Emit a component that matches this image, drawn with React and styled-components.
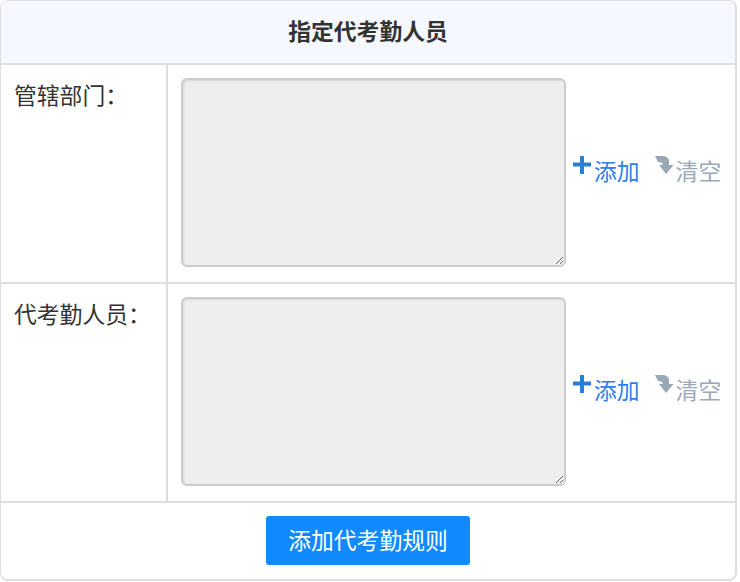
import React from 'react';
import styled, { createGlobalStyle } from 'styled-components';

const GlobalStyle = createGlobalStyle`
  html, body { margin: 0; padding: 0; background: #fff; }
  body { font-family: "Liberation Sans", "Noto Sans CJK SC", sans-serif; color: #333; }
  * { box-sizing: border-box; }
`;
const Panel = styled.div`
  width: 737px;
  height: 581px;
  border: 2px solid #dedede;
  border-top-width: 1px;
  border-left-width: 1px;
  border-radius: 8px;
  overflow: hidden;
  display: flex;
  flex-direction: column;
`;
const Header = styled.div`
  height: 64px;
  flex: none;
  background: #f5f9ff;
  border-bottom: 2px solid #dedede;
  padding-bottom: 3px;
  display: flex;
  align-items: center;
  justify-content: center;
  font-size: 22.8px;
  font-weight: 700;
  color: #333;
`;
const Row = styled.div`
  height: 219px;
  flex: none;
  display: flex;
  border-bottom: 2px solid #dedede;
`;
const LabelCell = styled.div`
  width: 167px;
  flex: none;
  border-right: 2px solid #dedede;
  padding: 13px 0 0 13px;
  font-size: 22.8px;
  line-height: 36px;
  color: #333;
`;
const FieldCell = styled.div`
  flex: 1;
  padding: 13px 0 0 13px;
  display: flex;
  align-items: flex-start;
`;
const Area = styled.textarea`
  width: 385px;
  height: 189px;
  margin: 0;
  flex: none;
  background: #eee;
  border: 2px solid #ccc;
  border-radius: 6px;
  outline: none;
  box-shadow: inset 1px 1px 2px rgba(0, 0, 0, 0.1);
`;
const Action = styled.a`
  display: flex;
  align-items: flex-start;
  margin: 78px 0 0 ${(p) => p.$gap}px;
  font-size: 22.8px;
  line-height: 32px;
  color: ${(p) => p.$color};
  white-space: nowrap;
  cursor: pointer;
  svg { flex: none; margin-top: -1px; margin-right: 2px; }
`;
const Footer = styled.div`
  flex: 1;
  display: flex;
  justify-content: center;
  padding-top: 13px;
`;
const SubmitButton = styled.button`
  width: 204px;
  height: 49px;
  background: #118aff;
  color: #fff;
  border: none;
  border-radius: 3px;
  font-family: inherit;
  font-size: 22.8px;
  padding: 0 0 3px;
  cursor: pointer;
`;

const PlusIcon = () => (
  <svg width="20" height="20" viewBox="0 0 20 20">
    <path d="M8 1h4v6.500h7v4h-7V19H8v-7.500H1v-4h7z" fill="#2a7fd4" />
  </svg>
);
const ClearIcon = () => (
  <svg width="20" height="22" viewBox="0 0 20 22">
    <path d="M1 1H8C12 1 15 3 15 6V10H19.500L12 19L5 10H8.500V8.500C8 7.500 6 7 4 7Z" fill="#9aa8b5" />
  </svg>
);

const rows = ['管辖部门：', '代考勤人员：'];

const App = () => (
  <>
    <GlobalStyle />
    <Panel>
      <Header>指定代考勤人员</Header>
      {rows.map((label) => (
        <Row key={label}>
          <LabelCell>{label}</LabelCell>
          <FieldCell>
            <Area disabled />
            <Action $gap={6} $color="#2f80ed"><PlusIcon />添加</Action>
            <Action $gap={14} $color="#9aa8b8"><ClearIcon />清空</Action>
          </FieldCell>
        </Row>
      ))}
      <Footer>
        <SubmitButton>添加代考勤规则</SubmitButton>
      </Footer>
    </Panel>
  </>
);

export default App;
